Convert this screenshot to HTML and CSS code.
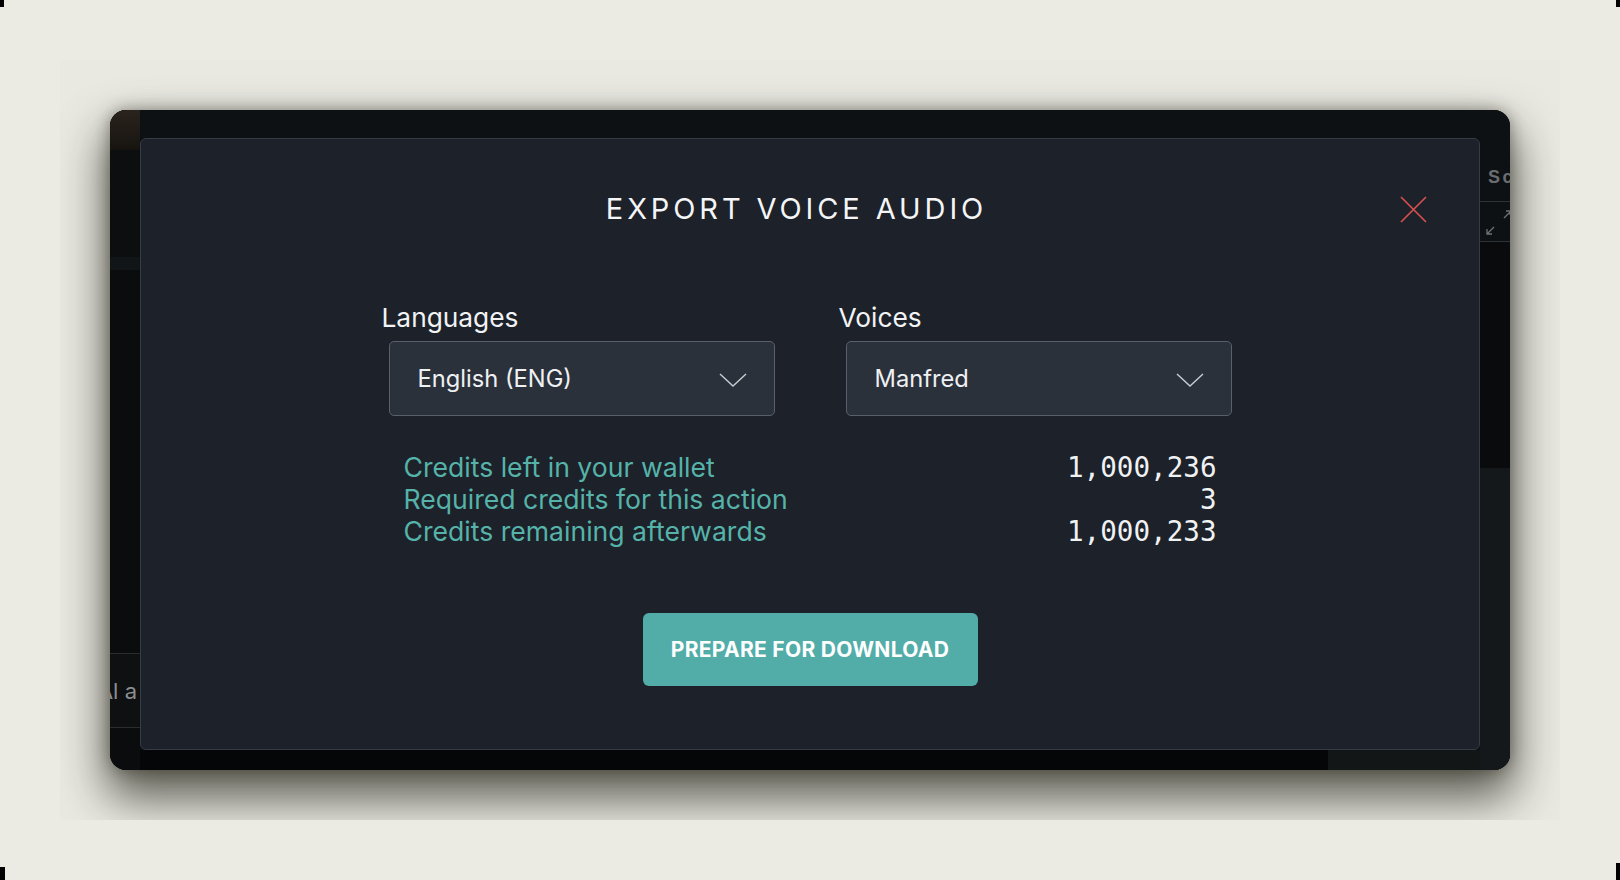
FILE: index.html
```html
<!DOCTYPE html>
<html lang="en">
<head>
    <meta charset="UTF-8">
    <title>Export Voice Audio</title>
    <link rel="stylesheet" href="styles.css">
</head>
<body>
    <span class="mark mark-tl"></span>
    <span class="mark mark-tr"></span>
    <span class="mark mark-bl"></span>
    <span class="mark mark-br"></span>

    <div class="stage">
        <div class="window">
            <!-- app behind the dialog, left edge -->
            <div class="side side-left">
                <div class="side-cap"></div>
                <div class="side-fill side-fill-short"></div>
                <div class="side-band"></div>
                <div class="side-fill"></div>
                <div class="side-row"><span>Al a</span></div>
                <div class="side-end"></div>
            </div>

            <div class="top-bar"></div>

            <!-- app behind the dialog, right edge -->
            <div class="side side-right">
                <div class="side-title"><span>Score</span></div>
                <div class="side-tools">
                    <svg width="30" height="38" viewBox="0 0 30 38" fill="none" stroke="#6f7275" stroke-width="1.3">
                        <path d="M24 16 L30 10 M26 9 H30 V13"/>
                        <path d="M14 25 L7 32 M7 27 V32 H12"/>
                    </svg>
                </div>
                <div class="side-fill side-fill-mid"></div>
                <div class="side-lower"></div>
            </div>

            <div class="modal">
                <div class="modal-header">
                    <h1>EXPORT VOICE AUDIO</h1>
                    <button class="close-btn" aria-label="Close">
                        <svg width="27" height="27" viewBox="0 0 27 27" stroke="#d4504e" stroke-width="1.7">
                            <path d="M1 1 L26 26 M26 1 L1 26"/>
                        </svg>
                    </button>
                </div>

                <div class="fields">
                    <div class="field">
                        <label>Languages</label>
                        <div class="select">
                            <span>English (ENG)</span>
                            <svg width="28" height="14" viewBox="0 0 28 14" fill="none" stroke="#c9cdd3" stroke-width="1.4">
                                <path d="M1 1 L14 13 L27 1"/>
                            </svg>
                        </div>
                    </div>
                    <div class="field">
                        <label>Voices</label>
                        <div class="select">
                            <span>Manfred</span>
                            <svg width="28" height="14" viewBox="0 0 28 14" fill="none" stroke="#c9cdd3" stroke-width="1.4">
                                <path d="M1 1 L14 13 L27 1"/>
                            </svg>
                        </div>
                    </div>
                </div>

                <div class="credits">
                    <div class="credit-row">
                        <span class="credit-label">Credits left in your wallet</span>
                        <span class="credit-value">1,000,236</span>
                    </div>
                    <div class="credit-row">
                        <span class="credit-label">Required credits for this action</span>
                        <span class="credit-value">3</span>
                    </div>
                    <div class="credit-row">
                        <span class="credit-label">Credits remaining afterwards</span>
                        <span class="credit-value">1,000,233</span>
                    </div>
                </div>

                <button class="download-btn">PREPARE FOR DOWNLOAD</button>
            </div>

            <div class="bottom-bar"></div>
        </div>
    </div>
</body>
</html>
```

FILE: styles.css
```css
body {
    margin: 0;
    background: #ebebe4;
    font-family: 'Inter', 'Noto Sans', sans-serif;
    overflow: hidden;
}

/* little black ticks in the corners */
.mark {
    position: fixed;
    width: 4px;
    background: #000;
}

.mark-tl { top: 0; left: 0; height: 7px; }
.mark-tr { top: 0; right: 0; height: 7px; }
.mark-bl { bottom: 0; left: 0; height: 13px; width: 5px; }
.mark-br { bottom: 0; right: 0; height: 17px; }

.stage {
    width: 1400px;
    height: 660px;
    margin: 60px 0 0 60px;
    padding: 50px;
    background: #e9e9e2;
    overflow: hidden;
}

.window {
    display: grid;
    grid-template-columns: 30px 1fr 30px;
    grid-template-rows: 28px 1fr 20px;
    height: 100%;
    background: #0c0f12;
    border-radius: 16px;
    overflow: hidden;
    box-shadow: 0 24px 46px 4px rgba(25, 25, 15, 0.68), 0 0 16px rgba(25, 25, 15, 0.4);
}

.side {
    grid-row: 1 / 4;
    display: flex;
    flex-direction: column;
    overflow: hidden;
}

.side-left {
    grid-column: 1;
    background: #0b0c0e;
}

.side-cap {
    height: 40px;
    background: linear-gradient(#2a231e, #17140f);
}

.side-fill {
    flex: 1;
}

.side-fill-short {
    flex: none;
    height: 107px;
    background: #0c0e10;
}

.side-band {
    height: 13px;
    background: #121517;
}

.side-row {
    height: 73px;
    display: flex;
    justify-content: flex-end;
    align-items: center;
    border-top: 1px solid #2a2d30;
    border-bottom: 1px solid #2a2d30;
    background: #0e1012;
    color: #8b8e91;
    font-size: 22px;
    white-space: nowrap;
    padding-right: 3px;
}

.side-end {
    height: 42px;
}

.top-bar {
    grid-column: 2;
    grid-row: 1;
    background: #0e1114;
}

.side-right {
    grid-column: 3;
    background: #0e1114;
}

.side-title {
    height: 92px;
    padding: 57px 0 0 8px;
    box-sizing: border-box;
    border-bottom: 1px solid #2e3235;
    color: #6a6d70;
    font-family: 'Liberation Sans', sans-serif;
    font-weight: 700;
    font-size: 18px;
    letter-spacing: 2.5px;
    white-space: nowrap;
}

.side-tools {
    height: 39px;
    border-bottom: 1px solid #2e3235;
}

.side-tools svg {
    display: block;
}

.side-fill-mid {
    flex: none;
    height: 226px;
    background: #0a0b0d;
}

.side-lower {
    flex: 1;
    background: #15181a;
}

.bottom-bar {
    grid-column: 2;
    grid-row: 3;
    background: linear-gradient(to right, #050608 1188px, #131617 1188px);
}

/* dialog */
.modal {
    grid-column: 2;
    grid-row: 2;
    min-height: 0;
    background: #1d2129;
    border: 1px solid #363c45;
    border-radius: 6px;
    padding: 52px 52px 0;
}

.modal-header {
    display: flex;
    align-items: center;
}

.modal-header h1 {
    flex: 1;
    margin: 0;
    text-align: center;
    color: #f4f5f6;
    font-size: 29px;
    font-weight: 400;
    line-height: 36px;
    letter-spacing: 3.9px;
}

.close-btn {
    width: 27px;
    height: 27px;
    padding: 0;
    border: none;
    background: none;
    cursor: pointer;
}

.close-btn svg {
    display: block;
}

.fields {
    display: flex;
    justify-content: center;
    gap: 71px;
    margin-top: 76px;
}

.field {
    width: 386px;
}

.field label {
    display: block;
    margin: 0 0 8px -7px;
    color: #f2f3f5;
    font-size: 26.3px;
    line-height: 30px;
}

.select {
    display: flex;
    align-items: center;
    justify-content: space-between;
    height: 75px;
    box-sizing: border-box;
    padding: 0 27px 0 28px;
    background: #2b313b;
    border: 1px solid #59606b;
    border-radius: 5px;
    color: #eef0f2;
    font-size: 23.7px;
    line-height: 30px;
}

.select svg {
    margin-top: 2px;
}

.credits {
    width: 813px;
    margin: 35px auto 0;
}

.credit-row {
    display: flex;
    justify-content: space-between;
    align-items: baseline;
    height: 32px;
    line-height: 32px;
}

.credit-label {
    color: #55b3a9;
    font-size: 26.6px;
}

.credit-value {
    color: #eff1f3;
    font-family: 'DejaVu Sans Mono', monospace;
    font-size: 27.6px;
    line-height: 30px;
}

.download-btn {
    display: block;
    width: 335px;
    height: 73px;
    margin: 66px auto 0;
    border: none;
    border-radius: 6px;
    background: #52ada9;
    color: #fff;
    font-family: 'Inter', sans-serif;
    font-size: 21px;
    font-weight: 700;
    letter-spacing: 0.3px;
    cursor: pointer;
}
```
